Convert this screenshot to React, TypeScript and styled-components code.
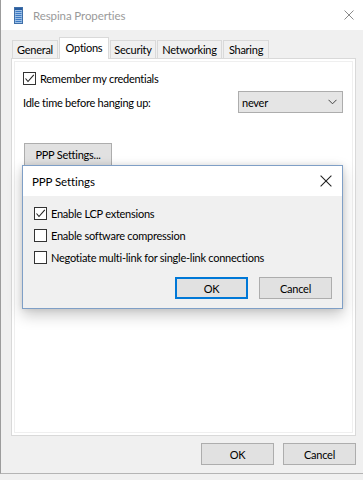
import React from "react";
import styled, { createGlobalStyle, css } from "styled-components";

const Global = createGlobalStyle`
  html, body { margin: 0; padding: 0; background: #f0f0f0; }
  body { font-family: "Lato", "Liberation Sans", sans-serif; font-size: 11px; letter-spacing: -0.25px; color: #000; }
  * { box-sizing: border-box; }
`;

const Window = styled.div`
  position: relative;
  width: 363px;
  height: 474px;
  display: flex;
  flex-direction: column;
  background: #f0f0f0;
  border-left: 1px solid #9c9c9c;
  border-bottom: 1px solid #b4b4b4;
`;

const TitleBar = styled.div`
  height: 30px;
  flex: none;
  display: flex;
  align-items: center;
  background: #fff;
  padding-left: 13px;
`;

const TitleText = styled.span`
  margin-left: 10px;
  color: #9a9a9a;
  font-size: 11.5px;
  letter-spacing: -0.1px;
`;

const CloseBox = styled.div`
  margin-left: auto;
  margin-right: 9px;
  display: flex;
  align-items: center;
`;

const Body = styled.div`
  flex: 1;
  display: flex;
  flex-direction: column;
  padding: 7px 7px 0 10px;
`;

const TabRow = styled.div`
  display: flex;
  align-items: flex-end;
  gap: 1px;
  padding-left: 1px;
  height: 21px;
  position: relative;
  z-index: 1;
`;

const Tab = styled.div<{ $w: number; $active?: boolean }>`
  width: ${(p) => p.$w}px;
  height: 18px;
  display: flex;
  align-items: center;
  justify-content: center;
  border: 1px solid #d9d9d9;
  border-bottom: none;
  background: #f0f0f0;
  white-space: nowrap;
  ${(p) =>
    p.$active &&
    css`
      height: 22px;
      margin-bottom: -1px;
      background: #fff;
      padding-bottom: 3px;
    `}
`;

const Panel = styled.div`
  height: 378px;
  background: #fff;
  border: 1px solid #d9d9d9;
  box-shadow: inset 0 0 0 2px #fff, inset 0 0 0 3px #efefef;
  padding: 13px 12px 0 11px;
  display: flex;
  flex-direction: column;
`;

const CheckRow = styled.label<{ $gap?: number }>`
  display: flex;
  align-items: center;
  height: 13px;
  gap: 4px;
  margin-top: ${(p) => p.$gap ?? 0}px;
  white-space: nowrap;
`;

const Box = styled.span`
  width: 13px;
  height: 13px;
  flex: none;
  border: 1px solid #333;
  background: #fff;
  display: flex;
  align-items: center;
  justify-content: center;
`;

const IdleRow = styled.div`
  display: flex;
  align-items: center;
  justify-content: space-between;
  margin-top: 6px;
`;

const Select = styled.div`
  width: 105px;
  height: 22px;
  border: 1px solid #adadad;
  background: #e5e5e5;
  display: flex;
  align-items: center;
  padding: 0 5px 0 3px;
  justify-content: space-between;
`;

const Button = styled.div<{ $w: number; $default?: boolean }>`
  width: ${(p) => p.$w}px;
  height: 22px;
  flex: none;
  border: 1px solid #adadad;
  background: #e1e1e1;
  display: flex;
  align-items: center;
  justify-content: center;
  white-space: nowrap;
  ${(p) =>
    p.$default &&
    css`
      border: 2px solid #0078d7;
    `}
`;

const PppButton = styled(Button)`
  margin-top: 30px;
  margin-left: 1px;
  height: 23px;
`;

const Footer = styled.div`
  display: flex;
  justify-content: flex-end;
  gap: 9px;
  padding-top: 7px;
`;

const Dialog = styled.div`
  position: absolute;
  left: 21px;
  top: 165px;
  width: 321px;
  height: 144px;
  border: 1px solid #7f9fc6;
  background: #f0f0f0;
  box-shadow: 0 6px 14px rgba(0, 0, 0, 0.22), 0 0 6px rgba(0, 0, 0, 0.1);
  display: flex;
  flex-direction: column;
  z-index: 5;
`;

const DialogTitle = styled.div`
  height: 30px;
  background: #fff;
  display: flex;
  align-items: center;
  padding: 0 9px 0 9px;
  font-size: 11.5px;
  letter-spacing: -0.1px;
`;

const DialogBody = styled.div`
  flex: 1;
  padding: 11px 10px 0 11px;
  display: flex;
  flex-direction: column;
`;

const DialogButtons = styled.div`
  display: flex;
  justify-content: flex-end;
  gap: 11px;
  margin-top: 13px;
`;

const Check = () => (
  <svg width="11" height="11" viewBox="0 0 11 11">
    <polyline points="1.5,5.5 4,8.5 9.8,1.8" fill="none" stroke="#222" strokeWidth="1.1" />
  </svg>
);

const CheckBox = ({ checked, label, gap }: { checked?: boolean; label: string; gap?: number }) => (
  <CheckRow $gap={gap}>
    <Box>{checked && <Check />}</Box>
    <span>{label}</span>
  </CheckRow>
);

const XIcon = ({ size, color, sw }: { size: number; color: string; sw: number }) => (
  <svg width={size} height={size} viewBox="0 0 10 10">
    <path d="M0.5 0.5 L9.5 9.5 M9.5 0.5 L0.5 9.5" stroke={color} strokeWidth={sw} fill="none" />
  </svg>
);

const AppIcon = () => (
  <svg width="9" height="17" viewBox="0 0 9 17">
    <rect x="0.5" y="0.5" width="8" height="16" fill="#9fc1e6" stroke="#3f6fa8" strokeWidth="1" />
    <rect x="1" y="1" width="7" height="2" fill="#2a5d9f" />
    {[4, 6, 8, 10, 12, 14].map((y) => (
      <rect key={y} x="1.5" y={y} width="6" height="1" fill="#3b78c2" />
    ))}
  </svg>
);

const Chevron = () => (
  <svg width="9" height="6" viewBox="0 0 9 6">
    <polyline points="0.5,0.8 4.5,4.8 8.5,0.8" fill="none" stroke="#444" strokeWidth="1" />
  </svg>
);

export default function App() {
  return (
    <>
      <Global />
      <Window>
        <TitleBar>
          <AppIcon />
          <TitleText>Respina Properties</TitleText>
          <CloseBox>
            <XIcon size={10} color="#8a8a8a" sw={1} />
          </CloseBox>
        </TitleBar>
        <Body>
          <TabRow>
            <Tab $w={46}>General</Tab>
            <Tab $w={50} $active>
              Options
            </Tab>
            <Tab $w={46}>Security</Tab>
            <Tab $w={65}>Networking</Tab>
            <Tab $w={46}>Sharing</Tab>
          </TabRow>
          <Panel>
            <CheckBox checked label="Remember my credentials" />
            <IdleRow>
              <span>Idle time before hanging up:</span>
              <Select>
                <span>never</span>
                <Chevron />
              </Select>
            </IdleRow>
            <PppButton $w={88}>PPP Settings...</PppButton>
          </Panel>
          <Footer>
            <Button $w={73}>OK</Button>
            <Button $w={73}>Cancel</Button>
          </Footer>
        </Body>
        <Dialog>
          <DialogTitle>
            <span>PPP Settings</span>
            <CloseBox style={{ marginRight: 1 }}>
              <XIcon size={12} color="#222" sw={0.9} />
            </CloseBox>
          </DialogTitle>
          <DialogBody>
            <CheckBox checked label="Enable LCP extensions" />
            <CheckBox gap={9} label="Enable software compression" />
            <CheckBox gap={9} label="Negotiate multi-link for single-link connections" />
            <DialogButtons>
              <Button $w={73} $default>
                OK
              </Button>
              <Button $w={73}>Cancel</Button>
            </DialogButtons>
          </DialogBody>
        </Dialog>
      </Window>
    </>
  );
}
